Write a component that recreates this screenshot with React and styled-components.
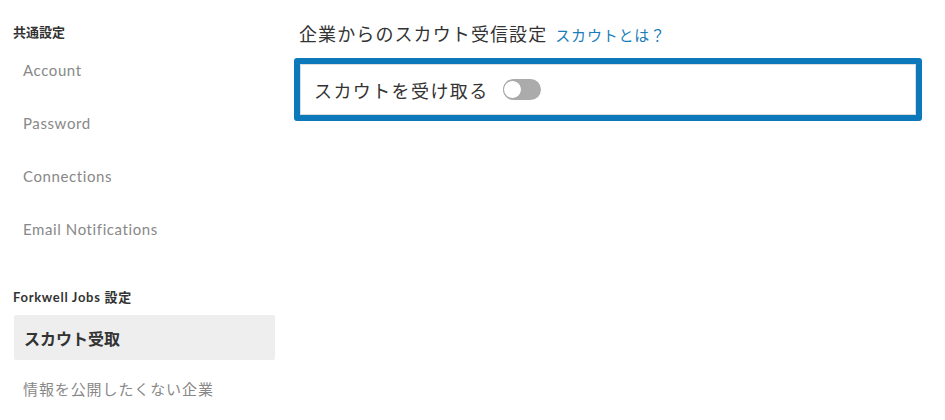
import React from 'react';
import styled, { createGlobalStyle } from 'styled-components';

const GlobalStyle = createGlobalStyle`
  body {
    margin: 0;
    background: #fff;
    font-family: Lato, "Noto Sans CJK JP", sans-serif;
    color: #333;
  }
`;

function App() {
  return (
    <>
      <GlobalStyle />
      <Page>
        <Sidebar>
          <SectionTitle>共通設定</SectionTitle>
          <NavItem>Account</NavItem>
          <NavItem>Password</NavItem>
          <NavItem>Connections</NavItem>
          <NavItem>Email Notifications</NavItem>
          <SectionTitle $spaced>Forkwell Jobs 設定</SectionTitle>
          <NavItem $active>スカウト受取</NavItem>
          <NavItem $jp>情報を公開したくない企業</NavItem>
        </Sidebar>
        <Main>
          <Heading>
            企業からのスカウト受信設定
            <HelpLink href="#">スカウトとは？</HelpLink>
          </Heading>
          <SettingBox>
            <SettingLabel>スカウトを受け取る</SettingLabel>
            <Toggle>
              <Knob />
            </Toggle>
          </SettingBox>
        </Main>
      </Page>
    </>
  );
}

export default App;

const Page = styled.div`
  display: flex;
  align-items: flex-start;
  padding: 22px 23px 0 14px;
`
const Sidebar = styled.nav`
  width: 261px;
  flex-shrink: 0;
  display: flex;
  flex-direction: column;
`
const SectionTitle = styled.h4`
  margin: ${p => (p.$spaced ? '28px' : '0')} 0 ${p => (p.$spaced ? '8px' : '5px')} -1px;
  font-size: 13px;
  line-height: 20px;
  font-weight: 700;
  letter-spacing: ${p => (p.$spaced ? '0.7px' : '0')};
  color: #333;
`
const NavItem = styled.div`
  height: 45px;
  margin-bottom: ${p => (p.$active ? '6px' : '8px')};
  padding-left: ${p => (p.$active ? '10px' : '9px')};
  display: flex;
  align-items: center;
  border-radius: 2px;
  background: ${p => (p.$active ? '#eeeeee' : 'transparent')};
  font-size: ${p => (p.$active ? '16px' : '15px')};
  font-weight: ${p => (p.$active ? 700 : 400)};
  letter-spacing: ${p => (p.$active ? '0' : p.$jp ? '0.9px' : '0.6px')};
  color: ${p => (p.$active ? '#333' : '#888')};
`
const Main = styled.main`
  flex: 1;
  margin-left: 19px;
  display: flex;
  flex-direction: column;
`
const Heading = styled.h2`
  margin: 0 0 11px 5px;
  font-size: 18px;
  line-height: 24px;
  font-weight: 400;
  letter-spacing: 1.1px;
  color: #333;
  display: flex;
  align-items: baseline;
  gap: 8px;
`
const HelpLink = styled.a`
  font-size: 15px;
  letter-spacing: 0.8px;
  color: #1a7db9;
  text-decoration: none;
`
const SettingBox = styled.div`
  height: 51px;
  border: 6px solid #0d79ba;
  border-radius: 3px;
  box-shadow: inset 0 0 0 1px #dcdcdc;
  display: flex;
  align-items: center;
  gap: 14px;
  padding-left: 14px;
`
const SettingLabel = styled.span`
  font-size: 18px;
  letter-spacing: 1.4px;
  color: #333;
`
const Toggle = styled.div`
  width: 38px;
  height: 21px;
  border-radius: 11px;
  background: #ababab;
  display: flex;
  align-items: center;
`
const Knob = styled.div`
  width: 19px;
  height: 19px;
  box-sizing: border-box;
  border: 1.5px solid #a5a5a5;
  border-radius: 50%;
  background: #fff;
`
